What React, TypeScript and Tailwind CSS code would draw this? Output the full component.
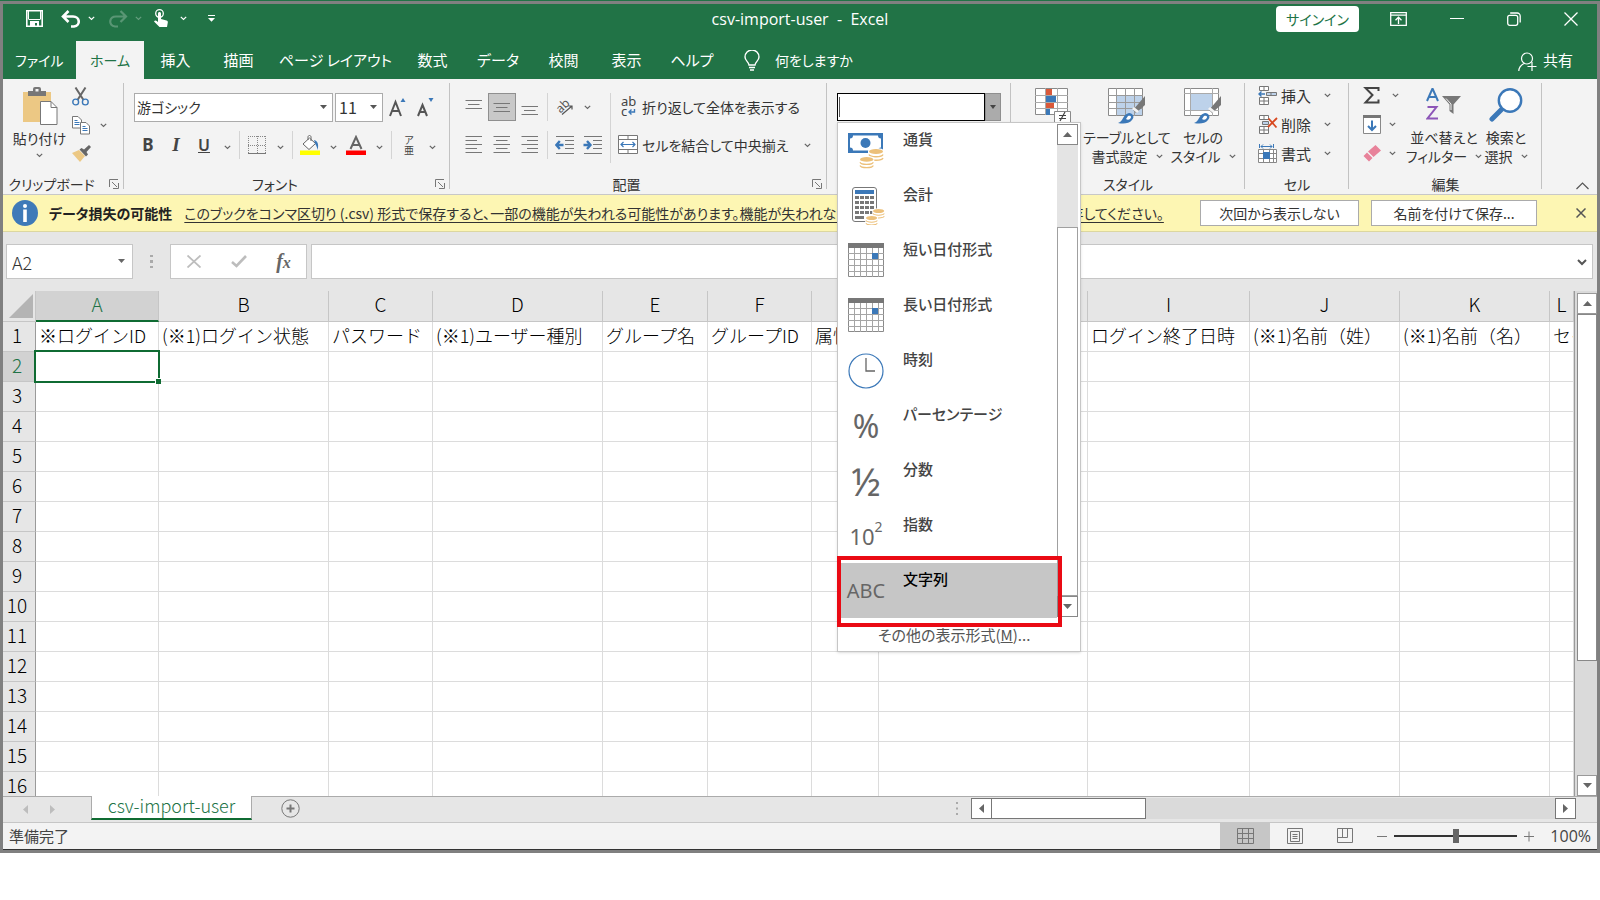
import type { ReactNode } from "react";

const tabs = [
  { label: "挿入", width: "w-[63px]" },
  { label: "描画", width: "w-[63px]" },
  { label: "ページ レイアウト", width: "w-[131px]" },
  { label: "数式", width: "w-[63px]" },
  { label: "データ", width: "w-[68px]" },
  { label: "校閲", width: "w-[63px]" },
  { label: "表示", width: "w-[63px]" },
  { label: "ヘルプ", width: "w-[68px]" },
];

const columns = [
  { name: "A", title: "※ログインID" },
  { name: "B", title: "(※1)ログイン状態" },
  { name: "C", title: "パスワード" },
  { name: "D", title: "(※1)ユーザー種別" },
  { name: "E", title: "グループ名" },
  { name: "F", title: "グループID" },
  { name: "G", title: "属性" },
  { name: "H", title: "" },
  { name: "I", title: "ログイン終了日時" },
  { name: "J", title: "(※1)名前（姓）" },
  { name: "K", title: "(※1)名前（名）" },
  { name: "L", title: "セイ" },
];

const rows = Array.from({ length: 16 }, (_, i) => i + 1);

/* ---------- small shared pieces ---------- */

function Chevron({ className = "text-[#666]" }: { className?: string }) {
  return (
    <svg className={`shrink-0 ${className}`} width="7" height="5" viewBox="0 0 7 5" fill="none" stroke="currentColor" strokeWidth="1.2">
      <path d="M0.8 0.8 3.5 3.5 6.2 0.8" />
    </svg>
  );
}

function Triangle({ dir, className = "text-[#666]" }: { dir: "up" | "down" | "left" | "right"; className?: string }) {
  const paths = {
    up: "M0 7 4.5 2 9 7Z",
    down: "M0 2 4.5 7 9 2Z",
    left: "M7 0 2 4.5 7 9Z",
    right: "M2 0 7 4.5 2 9Z",
  };
  return (
    <svg className={`shrink-0 ${className}`} width="9" height="9" viewBox="0 0 9 9" fill="currentColor">
      <path d={paths[dir]} />
    </svg>
  );
}

function Tool({ label, active, children }: { label: string; active?: boolean; children: ReactNode }) {
  return (
    <button
      type="button"
      aria-label={label}
      className={`flex h-7 w-7 shrink-0 items-center justify-center ${active ? "border border-[#8f8f8f] bg-[#c8c8c8]" : ""}`}
    >
      {children}
    </button>
  );
}

function More({ label }: { label: string }) {
  return (
    <button type="button" aria-label={label} className="flex h-7 w-[18px] shrink-0 items-center justify-center pt-1">
      <Chevron />
    </button>
  );
}

function Sep() {
  return <div className="mx-[3px] h-7 w-px shrink-0 bg-[#d4d4d4]" />;
}

function Group({ label, width, launcher, children }: { label: string; width: string; launcher?: boolean; children: ReactNode }) {
  return (
    <section className={`relative flex h-[115px] shrink-0 flex-col justify-between ${width}`}>
      {children}
      <div className={`flex h-5 items-center justify-center ${launcher ? "pr-6" : ""}`}>{label}</div>
      {launcher && (
        <button type="button" aria-label={`${label}の設定`} className="absolute bottom-[5px] right-[5px]">
          <svg width="10" height="10" viewBox="0 0 10 10" fill="none" stroke="#777">
            <path d="M0.5 8V0.5H9M3 3l5 5M9.5 4v5.5H4" />
          </svg>
        </button>
      )}
      <div className="absolute right-0 top-1 h-[106px] w-px bg-[#c2c2c2]" />
    </section>
  );
}

/* ---------- ribbon icons ---------- */

function Lines({ rows, align }: { rows: number[]; align: "left" | "center" | "right" }) {
  return (
    <svg width="18" height="20" viewBox="0 0 18 20" stroke="#777">
      {rows.map((y, i) => {
        const short = i % 2 === 1;
        const x1 = !short || align === "left" ? 0.5 : align === "center" ? 3 : 6;
        const x2 = !short || align === "right" ? 17 : align === "center" ? 14.5 : 12;
        return <path key={y} d={`M${x1} ${y}.5H${x2}`} />;
      })}
    </svg>
  );
}

function IndentIcon({ right }: { right?: boolean }) {
  return (
    <svg width="20" height="20" viewBox="0 0 20 20" fill="none">
      <path stroke="#777" d="M1 1.5h18M10 5.5h9M10 9.5h9M10 13.5h9M1 18.5h18" />
      <path stroke="#3b78b8" strokeWidth="2.4" d={right ? "M0.5 10H7M4 6 7.5 10 4 14" : "M1.5 10H8.5M4.8 6 1.3 10l3.5 4"} />
    </svg>
  );
}

function PasteIcon() {
  return (
    <svg width="36" height="40" viewBox="0 0 36 40" fill="none">
      <path fill="#ecc884" d="M1 5h28v30H1z" />
      <path fill="#777" d="M6 4h5V2a2 2 0 0 1 2-2h4a2 2 0 0 1 2 2v2h5v5H6z" />
      <path fill="#f3f3f3" d="M13.500 2h3v2.500h-3z" />
      <path fill="#fff" stroke="#777" d="M18.500 14.500H29l6 6V37.500H18.500z" />
      <path stroke="#777" d="M29 14.500v6h6" />
    </svg>
  );
}

function CutIcon() {
  return (
    <svg width="17" height="19" viewBox="0 0 17 19" fill="none">
      <path stroke="#666" strokeWidth="2" d="M3.500 0.500 11.500 13M13.500 0.500 5.500 13" />
      <circle cx="3.700" cy="15" r="2.900" stroke="#3b78b8" strokeWidth="1.400" />
      <circle cx="13.300" cy="15" r="2.900" stroke="#3b78b8" strokeWidth="1.400" />
    </svg>
  );
}

function CopyIcon() {
  return (
    <svg width="18" height="19" viewBox="0 0 18 19" fill="#fff" stroke="#777">
      <path d="M0.500 0.500H6l3.500 3.500v8h-9z" />
      <path stroke="#3b78b8" d="M2.500 4.500h3M2.500 6.500h5M2.500 8.500h5" />
      <path d="M8.500 6.500H14l3.500 3.500v8h-9z" />
      <path stroke="#3b78b8" d="M10.500 10.500h3M10.500 12.500h5M10.500 14.500h5" />
    </svg>
  );
}

function PainterIcon() {
  return (
    <svg width="19" height="17" viewBox="0 0 19 17">
      <path fill="#ecc884" d="M0 8 7 5l6 6-5 6z" />
      <path fill="#666" d="M7.500 4.500 9.500 3l2.500 1.500L17 0l2 2-4.500 5 1.500 2.500-2 2z" />
    </svg>
  );
}

function BrushOverlay() {
  return (
    <>
      <path fill="#777" d="M37 8v9l-9 8-3-3z" />
      <path fill="#f3f3f3" d="m26 19 5 4-2 2-5-4z" />
      <path fill="#3b78b8" d="M10 35c5-1 5-9 11-10 4 0 6 4 3 7-3 4-9 4-14 3z" />
      <path fill="#fff" d="M20 28c3-1 4 1 2 3-1 1-3 1-4 0z" />
    </>
  );
}

function CondFormatIcon() {
  return (
    <svg width="37" height="36" viewBox="0 0 37 36">
      <path fill="#fff" stroke="#8a8a8a" d="M0.500 0.500h32v26h-32z" />
      <path stroke="#aaa" d="M0 7.500h33M0 14.500h33M0 20.500h33M10.500 0v27M22.500 0v27" />
      <path fill="#d9593a" d="M11 1h6v6h-6zM11 15h8v5h-8z" />
      <path fill="#3b78b8" d="M11 8h10v6H11zM11 21h4v6h-4z" />
      <path fill="#fff" stroke="#8a8a8a" d="M19.500 23.500h16v12h-16z" />
      <path stroke="#444" strokeWidth="1.200" d="M24 27.500h7M24 30.500h7M30 24l-5 9" />
    </svg>
  );
}

function TableFormatIcon() {
  return (
    <svg width="38" height="36" viewBox="0 0 38 36">
      <path fill="#fff" stroke="#8a8a8a" d="M0.500 0.500h34v27h-34z" />
      <path fill="#bdd2ea" d="M9 8h25v19H9z" />
      <path stroke="#9a9a9a" d="M0 7.500h35M0 14.500h35M0 20.500h35M8.500 0v28M17.500 0v28M26.500 0v28" />
      <BrushOverlay />
    </svg>
  );
}

function CellStyleIcon() {
  return (
    <svg width="38" height="36" viewBox="0 0 38 36">
      <path fill="#fff" stroke="#8a8a8a" d="M0.500 0.500h34v27h-34z" />
      <path stroke="#aaa" d="M0 5.500h35M0 22.500h35M6.500 0v28M28.500 0v28" />
      <path fill="#bdd2ea" d="M7 6h21v16H7z" />
      <BrushOverlay />
    </svg>
  );
}

function InsertCellsIcon() {
  return (
    <svg width="19" height="19" viewBox="0 0 19 19" fill="#fff" stroke="#777">
      <path d="M1.500 0.500h9v4h-9zM6 0.500v4M1.500 11.500h9v7h-9zM6 11.500v7M1.500 15h9" />
      <path fill="#bdd2ea" d="M8.500 6.500h10v3h-10zM13 6.500v3" />
      <path fill="none" stroke="#3b78b8" strokeWidth="1.400" d="M7 8H1M3.500 5.500 1 8l2.500 2.500" />
    </svg>
  );
}

function DeleteCellsIcon() {
  return (
    <svg width="20" height="19" viewBox="0 0 20 19" fill="#fff" stroke="#777">
      <path d="M1.500 0.500h9v4h-9zM6 0.500v4M1.500 11.500h9v7h-9zM6 11.500v7M1.500 15h9" />
      <path fill="#bdd2ea" d="M4.500 6.500h6v3h-6z" />
      <path fill="none" stroke="#d8481f" strokeWidth="1.800" d="m10.500 3.500 8 9M19 3l-9 9" />
    </svg>
  );
}

function FormatCellsIcon() {
  return (
    <svg width="19" height="20" viewBox="0 0 19 20" fill="#fff" stroke="#888">
      <path d="M0.500 5.500h18v13h-18zM0.500 9.500h18M0.500 14.500h18M5.500 5.500v13M11.500 5.500v13M15.500 5.500v13" />
      <path fill="#3b78b8" stroke="none" d="M5 8h7v7H5z" />
      <path fill="none" stroke="#3b78b8" d="M1.500 0v4M15.500 0v4M3 2.500h11M5 0.500l-2 2 2 2M12 0.500l2 2-2 2" />
    </svg>
  );
}

function SortFilterIcon() {
  return (
    <svg width="36" height="32" viewBox="0 0 36 32" fill="none">
      <path stroke="#3b78b8" strokeWidth="2" d="M1 13 6.500 0.500 12 13M3 9h7" />
      <path stroke="#8d56b8" strokeWidth="2" d="M1.500 19h9L1.500 30.500H12" />
      <path fill="#777" d="M16 8h19l-7.500 8.500V26l-4-3v-6.500z" />
      <path stroke="#f3f3f3" d="M20 10.500l5 5.500v6" />
    </svg>
  );
}

function FindIcon() {
  return (
    <svg width="34" height="34" viewBox="0 0 34 34" fill="none" stroke="#3b78b8">
      <path strokeWidth="5" strokeLinecap="round" d="M3 31 12 22" />
      <circle cx="21" cy="12.500" r="11.200" fill="#fff" strokeWidth="2.400" />
    </svg>
  );
}

/* ---------- number format list ---------- */

function Coins({ x, y, s = 1 }: { x: number; y: number; s?: number }) {
  return (
    <g transform={`translate(${x} ${y}) scale(${s})`}>
      <path fill="#fff" d="M-1 2c0-4 16-4 16 0v11c0 3-16 3-16 0z" />
      <ellipse cx="7" cy="2.500" rx="7" ry="2.500" fill="#ecc07a" />
      <path fill="none" stroke="#ecc07a" strokeWidth="1.300" d="M0 5.500c1 3 13 3 14 0M0 9c1 3 13 3 14 0" />
    </g>
  );
}

function CurrencyIcon() {
  return (
    <svg width="36" height="36" viewBox="0 0 36 36">
      <path fill="#3b78b8" d="M0 0h35v20H0z" />
      <path fill="#fff" d="M5 2.500h25c0 2 1 3 3 3v9c-2 0-3 1-3 3H5c0-2-1-3-3-3v-9c2 0 3-1 3-3z" />
      <circle cx="17.500" cy="10" r="5" fill="#3b78b8" />
      <Coins x={21} y={16} />
      <Coins x={12} y={24} s={0.95} />
    </svg>
  );
}

function AccountingIcon() {
  return (
    <svg width="38" height="38" viewBox="0 0 38 38">
      <rect x="5.500" y="0.500" width="24" height="34" rx="2.500" fill="#fff" stroke="#777" />
      <path fill="#3b78b8" d="M8 3h19v4H8z" />
      {[9, 14, 19, 24].map((y) => (
        <path key={y} fill="#777" d={`M8 ${y}h4v3H8zM13 ${y}h4v3h-4zM18 ${y}h4v3h-4zM23 ${y}h4v3h-4z`} />
      ))}
      <path fill="#777" d="M8 29h9v3H8z" />
      <Coins x={26} y={22} s={0.8} />
      <Coins x={19} y={29} s={0.8} />
    </svg>
  );
}

function CalendarIcon() {
  return (
    <svg width="36" height="35" viewBox="0 0 36 35">
      <path fill="#fff" stroke="#8a8a8a" d="M0.500 0.500h35v33h-35z" />
      <path stroke="#a5a5a5" d="M6.500 4v30M12.500 4v30M18.500 4v30M24.500 4v30M30.500 4v30M0 10.500h36M0 16.500h36M0 22.500h36M0 28.500h36" />
      <path fill="#777" d="M0 0h36v5H0z" />
      <path fill="#3b78b8" d="M24 10h6v6h-6z" />
    </svg>
  );
}

function ClockIcon() {
  return (
    <svg width="36" height="36" viewBox="0 0 36 36" fill="none">
      <circle cx="18" cy="18" r="17" stroke="#3b78b8" strokeWidth="1.200" />
      <path stroke="#666" strokeWidth="1.300" d="M18 5v13h9" />
    </svg>
  );
}

const formats: { label: string; icon: ReactNode }[] = [
  { label: "通貨", icon: <CurrencyIcon /> },
  { label: "会計", icon: <AccountingIcon /> },
  { label: "短い日付形式", icon: <CalendarIcon /> },
  { label: "長い日付形式", icon: <CalendarIcon /> },
  { label: "時刻", icon: <ClockIcon /> },
  { label: "パーセンテージ", icon: <span className="text-[32px]">%</span> },
  { label: "分数", icon: <span className="text-[38px]">½</span> },
  {
    label: "指数",
    icon: (
      <span className="flex text-[22px]">
        10<span className="-mt-2 text-sm">2</span>
      </span>
    ),
  },
  { label: "文字列", icon: <span className="text-xl">ABC</span> },
];

function FormatMenu() {
  return (
    <div className="absolute left-[10px] top-[43px] z-20 w-[244px] border border-[#c6c6c6] bg-white shadow-sm">
      <div className="flex">
        <div role="listbox" aria-label="表示形式" className="flex-1">
          {formats.map((f, i) => (
            <button
              key={f.label}
              type="button"
              role="option"
              aria-selected={i === 8}
              className={`flex h-[55px] w-full gap-[18px] pl-[9px] text-left text-[15px] font-medium ${i === 8 ? "bg-[#c6c6c6] text-black" : "text-[#444]"}`}
            >
              <span className="flex h-full w-[38px] shrink-0 items-center justify-center font-['Noto_Sans'] font-normal leading-none text-[#666]">
                {f.icon}
              </span>
              <span className="pt-[5px] leading-[22px]">{f.label}</span>
            </button>
          ))}
        </div>
        <div className="my-px mr-[2px] flex w-[21px] flex-col">
          <button type="button" aria-label="上へ" className="flex h-[21px] items-center justify-center border border-[#888] bg-white">
            <Triangle dir="up" />
          </button>
          <div className="h-[82px] bg-[#e4e4e4]" />
          <div className="flex-1 border border-[#a0a0a0] bg-white" />
          <button type="button" aria-label="下へ" className="flex h-[21px] items-center justify-center border border-[#888] bg-white">
            <Triangle dir="down" />
          </button>
        </div>
      </div>
      <button type="button" className="flex h-[33px] w-full items-center pl-10 text-[15px] text-[#555]">
        その他の表示形式(<span className="underline">M</span>)...
      </button>
      <div className="absolute -left-px bottom-6 h-[71px] w-[225px] border-4 border-[#ea0a14]" />
    </div>
  );
}

/* ---------- window parts ---------- */

function TitleBar() {
  return (
    <div className="grid h-[37px] grid-cols-[1fr_auto_1fr] items-center">
      <div className="flex h-full items-center pb-2 pl-[23px]">
        <button type="button" aria-label="上書き保存" className="mr-[18px]">
          <svg width="17" height="17" viewBox="0 0 17 17" fill="none" stroke="#fff" strokeWidth="1.600">
            <path d="M0.800 0.800h15.400v15.400H0.800z" />
            <path d="M2.500 9.500h12M2.500 1v8M14.500 1v8" strokeWidth="1" />
            <path fill="#fff" stroke="none" d="M4 11h9v5h-2v-3h-2v3H4z" />
          </svg>
        </button>
        <button type="button" aria-label="元に戻す">
          <svg width="20" height="18" viewBox="0 0 20 18" fill="none" stroke="#fff" strokeWidth="2.600">
            <path d="M2 6.500h10c7 0 8 9 1 10H10M7.500 1 2 6.500 7.500 12" />
          </svg>
        </button>
        <span className="mx-[7px]"><Chevron className="text-white" /></span>
        <button type="button" aria-label="やり直し" className="ml-[6px] opacity-25">
          <svg width="20" height="18" viewBox="0 0 20 18" fill="none" stroke="#fff" strokeWidth="2.200">
            <path d="M18 6.500H8c-7 0-8 9-1 10h3M12.500 1 18 6.500 12.500 12" />
          </svg>
        </button>
        <span className="ml-[7px] mr-3 opacity-30"><Chevron className="text-white" /></span>
        <button type="button" aria-label="タッチ/マウス モードの切り替え">
          <svg width="14" height="19" viewBox="0 0 14 19" fill="#fff">
            <circle cx="5.500" cy="4.500" r="3.800" fill="none" stroke="#fff" strokeWidth="1.300" />
            <path d="M4 4.500c0-2 3-2 3 0V10l5.500 1.500c1 .3 1.500 1 1.300 2L13 18H5.500L0 12.500c1-1.500 2.500-1 4 .5z" />
          </svg>
        </button>
        <span className="ml-3 mr-[21px]"><Chevron className="text-white" /></span>
        <button type="button" aria-label="クイック アクセス ツール バーのカスタマイズ">
          <svg width="7" height="7" viewBox="0 0 7 7" fill="#fff">
            <path d="M0 0h7v1H0zM0 3h7L3.500 6.800z" />
          </svg>
        </button>
      </div>
      <h1 className="whitespace-pre pb-2 font-['Open_Sans'] text-base text-white">csv-import-user  -  Excel</h1>
      <div className="flex h-full items-center justify-end pb-2 pr-[19px] text-white">
        <button type="button" className="mr-[31px] h-[26px] w-[83px] rounded-sm bg-white text-sm text-[#217346]">サインイン</button>
        <button type="button" aria-label="リボンの表示オプション" className="mr-[43px]">
          <svg width="17" height="14" viewBox="0 0 17 14" fill="none" stroke="#fff" strokeWidth="1.300">
            <path d="M0.700 0.700h15.600v12.600H0.700zM0.700 3.200h15.600M8.500 12V5.500M5.500 8.200l3-3 3 3" />
          </svg>
        </button>
        <button type="button" aria-label="最小化" className="mr-[43px] h-px w-[14px] bg-white" />
        <button type="button" aria-label="元に戻す (縮小)" className="mr-[43px]">
          <svg width="14" height="14" viewBox="0 0 14 14" fill="none" stroke="#fff" strokeWidth="1.300">
            <rect x="0.700" y="3.300" width="10" height="10" rx="2" />
            <path d="M3.200 1h7a3 3 0 0 1 3 3v6.500" />
          </svg>
        </button>
        <button type="button" aria-label="閉じる">
          <svg width="14" height="14" viewBox="0 0 14 14" stroke="#fff" strokeWidth="1.300">
            <path d="M0.500 0.500l13 13M13.500 0.500l-13 13" />
          </svg>
        </button>
      </div>
    </div>
  );
}

function TabBar() {
  return (
    <nav className="flex h-[38px] items-stretch whitespace-nowrap text-[15px] text-white">
      <button type="button" className="w-[73px] pl-3 text-left text-sm">ファイル</button>
      <button type="button" className="w-[68px] bg-[#f3f3f3] text-sm text-[#217346]">ホーム</button>
      {tabs.map((tab) => (
        <button key={tab.label} type="button" className={tab.width}>{tab.label}</button>
      ))}
      <button type="button" className="flex items-center gap-[15px] pl-[18px] text-sm">
        <svg width="16" height="21" viewBox="0 0 16 21" fill="none" stroke="#fff" strokeWidth="1.400">
          <path d="M5 15c0-3-4-4-4-8a7 7 0 0 1 14 0c0 4-4 5-4 8zM5 17.500h6M6 20h4" />
        </svg>
        何をしますか
      </button>
      <button type="button" className="ml-auto flex items-center gap-[6px] pr-6">
        <svg className="mt-1" width="19" height="20" viewBox="0 0 19 20" fill="none" stroke="#fff" strokeWidth="1.200">
          <circle cx="9" cy="6.500" r="5.500" />
          <path d="M0.800 19c0-4 2.500-6 5-7.500M14 10v9M9.500 14.500h9" />
        </svg>
        共有
      </button>
    </nav>
  );
}

function BigButton({ icon, first, second, width }: { icon: ReactNode; first: string; second: string; width: string }) {
  return (
    <button type="button" className={`flex shrink-0 flex-col items-center whitespace-nowrap leading-[19px] ${width}`}>
      <span className="flex h-10 items-start">{icon}</span>
      <span>{first}</span>
      <span className="flex items-center gap-2">
        {second}
        <Chevron />
      </span>
    </button>
  );
}

function Ribbon() {
  return (
    <div className="flex border-b border-[#c8c8c8] bg-[#f3f3f3] text-sm text-[#333]">
      <Group label="クリップボード" width="w-[121px]" launcher>
        <div className="flex pt-2">
          <button type="button" className="flex w-[69px] flex-col items-center pl-1">
            <PasteIcon />
            <span className="h-[22px] leading-[22px]">貼り付け</span>
            <span className="mt-1"><Chevron /></span>
          </button>
          <div className="flex flex-col gap-[10px]">
            <button type="button" aria-label="切り取り" className="flex h-[19px] w-[17px] items-center"><CutIcon /></button>
            <div className="flex items-center gap-[10px]">
              <button type="button" aria-label="コピー"><CopyIcon /></button>
              <Chevron />
            </div>
            <button type="button" aria-label="書式のコピー/貼り付け"><PainterIcon /></button>
          </div>
        </div>
      </Group>

      <Group label="フォント" width="w-[326px]" launcher>
        <div className="flex flex-col gap-[10px] pl-[10px] pt-[14px]">
          <div className="flex h-7 items-center">
            <div className="relative mr-[2px]">
              <select aria-label="フォント名" className="block h-[29px] w-[199px] appearance-none rounded-none border border-[#ababab] bg-white pl-[2px]">
                <option>游ゴシック</option>
              </select>
              <svg className="pointer-events-none absolute right-[6px] top-3" width="7" height="4" viewBox="0 0 7 4"><path fill="#555" d="M0 0h7L3.500 4z" /></svg>
            </div>
            <div className="relative">
              <select aria-label="フォント サイズ" className="block h-[29px] w-12 appearance-none rounded-none border border-[#ababab] bg-white pl-[3px] text-base">
                <option>11</option>
              </select>
              <svg className="pointer-events-none absolute right-[6px] top-3" width="7" height="4" viewBox="0 0 7 4"><path fill="#555" d="M0 0h7L3.500 4z" /></svg>
            </div>
            <Tool label="フォント サイズの拡大">
              <svg width="17" height="19" viewBox="0 0 17 19" fill="none">
                <path stroke="#555" strokeWidth="2" d="M1 18 6.500 4 12 18M3 13h7" />
                <path fill="#3b78b8" d="M11.500 4 14 0l2.500 4z" />
              </svg>
            </Tool>
            <Tool label="フォント サイズの縮小">
              <svg width="17" height="19" viewBox="0 0 17 19" fill="none">
                <path stroke="#555" strokeWidth="2" d="M1 18 5.500 7 10 18M2.500 14h6" />
                <path fill="#3b78b8" d="M11.500 0 14 4l2.500-4z" />
              </svg>
            </Tool>
          </div>
          <div className="flex h-7 items-center">
            <Tool label="太字"><span className="font-['Noto_Sans'] text-[17px] font-bold text-[#444]">B</span></Tool>
            <Tool label="斜体"><span className="font-['Liberation_Serif'] text-[19px] font-bold italic text-[#444]">I</span></Tool>
            <Tool label="下線"><span className="font-['Noto_Sans'] text-base font-semibold text-[#444] underline decoration-1">U</span></Tool>
            <More label="下線の種類" />
            <Sep />
            <Tool label="罫線">
              <svg width="18" height="18" viewBox="0 0 18 18" fill="none" stroke="#888">
                <path strokeDasharray="1 1" d="M0.500 0v17M17.500 0v17M9.500 0v17M0 0.500h18M0 9.500h18" />
                <path stroke="#777" d="M0 17.500h18" />
              </svg>
            </Tool>
            <More label="罫線の種類" />
            <Sep />
            <Tool label="塗りつぶしの色">
              <svg width="20" height="20" viewBox="0 0 20 20" fill="none">
                <path fill="#fff" stroke="#666" d="M3 9 9.500 3l6 5.500-6.500 6zM8 5V2c0-2 3-2 3 0v4" />
                <path fill="#3b78b8" d="M14 5c4 1 5 5 3.500 10-.5-3-1-4-2-5.500z" />
                <path fill="#ffff00" d="M0 15.500h20v4.500H0z" />
              </svg>
            </Tool>
            <More label="塗りつぶしの色の選択" />
            <Tool label="フォントの色">
              <svg width="20" height="20" viewBox="0 0 20 20" fill="none">
                <path stroke="#666" strokeWidth="2" d="M4.500 14 10 2l5.500 12M6.500 10h7" />
                <path fill="#ff0000" d="M0 15.500h20v4.500H0z" />
              </svg>
            </Tool>
            <More label="フォントの色の選択" />
            <Sep />
            <Tool label="ふりがなの表示">
              <span className="flex flex-col text-[10px] leading-[10px] text-[#444]"><span>ア</span><span>亜</span></span>
            </Tool>
            <More label="ふりがなの設定" />
          </div>
        </div>
      </Group>

      <Group label="配置" width="w-[377px]" launcher>
        <div className="flex pl-[10px] pt-[14px]">
          <div className="flex flex-col gap-[10px]">
            <div className="flex h-7 items-center">
              <Tool label="上揃え"><Lines rows={[3, 7, 11]} align="center" /></Tool>
              <Tool label="上下中央揃え" active><Lines rows={[6, 10, 14]} align="center" /></Tool>
              <Tool label="下揃え"><Lines rows={[9, 13, 17]} align="center" /></Tool>
              <Sep />
              <Tool label="方向">
                <svg className="overflow-visible" width="18" height="18" viewBox="0 0 18 18">
                  <g transform="rotate(-45 8 8)"><text x="0" y="11" fontSize="12" fill="#555" fontFamily="Noto Sans">ab</text></g>
                  <path fill="none" stroke="#555" strokeWidth="1.200" d="M6 16.500 16 8M12.500 8H16v3.500" />
                </svg>
              </Tool>
              <button type="button" aria-label="方向の種類" className="flex w-4 justify-center"><Chevron /></button>
            </div>
            <div className="flex h-7 items-center">
              <Tool label="左揃え"><Lines rows={[1, 5, 9, 13, 17]} align="left" /></Tool>
              <Tool label="中央揃え"><Lines rows={[1, 5, 9, 13, 17]} align="center" /></Tool>
              <Tool label="右揃え"><Lines rows={[1, 5, 9, 13, 17]} align="right" /></Tool>
              <Sep />
              <Tool label="インデントを減らす"><IndentIcon /></Tool>
              <Tool label="インデントを増やす"><IndentIcon right /></Tool>
            </div>
          </div>
          <div className="mx-[3px] h-[70px] w-px bg-[#d4d4d4]" />
          <div className="flex flex-col gap-[10px]">
            <button type="button" className="flex h-7 items-center gap-1 whitespace-nowrap pl-1">
              <svg className="overflow-visible" width="20" height="20" viewBox="0 0 20 20">
                <text x="3" y="9" fontSize="13" fill="#444" fontFamily="Noto Sans">ab</text>
                <text x="3" y="19" fontSize="13" fill="#444" fontFamily="Noto Sans">c</text>
                <path fill="none" stroke="#3b78b8" strokeWidth="1.400" d="M16.500 12v3H11M13.500 12.500 11 15l2.500 2.500" />
              </svg>
              折り返して全体を表示する
            </button>
            <button type="button" className="flex h-7 items-center gap-1 whitespace-nowrap pl-1">
              <svg width="20" height="20" viewBox="0 0 20 20" fill="#fff" stroke="#777">
                <path d="M0.500 0.500h19v18H0.500zM10 0.500v4M10 14.500v4M0.500 4.500h19M0.500 14.500h19" />
                <path fill="none" stroke="#3b78b8" strokeWidth="1.200" d="M3 9.500h14M5.500 7 3 9.500 5.500 12M14.500 7 17 9.500 14.500 12" />
              </svg>
              セルを結合して中央揃え
              <span className="pl-3"><Chevron /></span>
            </button>
          </div>
        </div>
      </Group>

      <section className="relative h-[115px] w-[184px] shrink-0 pl-[10px] pt-[14px]">
        <div className="relative flex h-7 w-[164px]">
          <input aria-label="数値の書式" className="min-w-0 flex-1 border border-black bg-white px-1" />
          <div className="absolute left-[2px] top-1 h-5 w-px bg-[#555]" />
          <button type="button" aria-label="表示形式を開く" className="flex w-4 items-center justify-center border border-[#8f8f8f] bg-[#ababab]">
            <svg width="6" height="4" viewBox="0 0 6 4"><path fill="#444" d="M0 0h6L3 4z" /></svg>
          </button>
        </div>
        <FormatMenu />
        <div className="absolute right-0 top-1 h-[106px] w-px bg-[#c2c2c2]" />
      </section>

      <Group label="スタイル" width="w-[234px]">
        <div className="flex pt-[9px]">
          <button type="button" aria-label="条件付き書式" className="flex w-[74px] items-start justify-center pl-[10px]"><CondFormatIcon /></button>
          <BigButton width="w-[84px]" icon={<TableFormatIcon />} first="テーブルとして" second="書式設定" />
          <BigButton width="w-[68px]" icon={<CellStyleIcon />} first="セルの" second="スタイル" />
        </div>
      </Group>

      <Group label="セル" width="w-[104px]">
        <div className="flex flex-col pl-3 pt-[2px] text-[15px]">
          {[
            { label: "挿入", icon: <InsertCellsIcon /> },
            { label: "削除", icon: <DeleteCellsIcon /> },
            { label: "書式", icon: <FormatCellsIcon /> },
          ].map((item) => (
            <button key={item.label} type="button" className="flex h-[29px] items-center pl-px">
              <span className="w-[23px]">{item.icon}</span>
              <span className="w-[43px] text-left">{item.label}</span>
              <Chevron />
            </button>
          ))}
        </div>
      </Group>

      <Group label="編集" width="w-[193px]">
        <div className="flex">
          <div className="flex w-[58px] flex-col pl-[14px] pt-[2px]">
            <button type="button" aria-label="合計" className="flex h-[29px] items-center gap-[11px]">
              <svg width="18" height="17" viewBox="0 0 18 17" fill="none" stroke="#444" strokeWidth="2">
                <path d="M15.500 4V1H2.500l7 7-7 7.500h13v-3" />
              </svg>
              <Chevron />
            </button>
            <button type="button" aria-label="フィル" className="flex h-[29px] items-center gap-2">
              <svg width="18" height="19" viewBox="0 0 18 19" fill="none">
                <path fill="#fff" stroke="#888" d="M0.500 0.500h17v18H0.500z" />
                <path fill="#777" d="M0 0h18v3H0z" />
                <path stroke="#3b78b8" strokeWidth="2" d="M9 5.500V15M5 11l4 4 4-4" />
              </svg>
              <Chevron />
            </button>
            <button type="button" aria-label="クリア" className="flex h-[29px] items-center gap-2">
              <svg width="18" height="17" viewBox="0 0 18 17" fill="#e8829a">
                <path d="M12.500 0 18 5.500 10.500 12 5 6.500zM4 7.500l5.500 5.500L6 16.500 0.500 11z" />
              </svg>
              <Chevron />
            </button>
          </div>
          <div className="flex pt-[9px]">
            <BigButton width="w-[74px]" icon={<SortFilterIcon />} first="並べ替えと" second="フィルター" />
            <BigButton width="w-[50px]" icon={<FindIcon />} first="検索と" second="選択" />
          </div>
        </div>
      </Group>

      <div className="flex flex-1 items-end justify-end pb-1 pr-2">
        <button type="button" aria-label="リボンを折りたたむ">
          <svg width="13" height="8" viewBox="0 0 13 8" fill="none" stroke="#555" strokeWidth="1.200"><path d="M0.500 7 6.500 1l6 6" /></svg>
        </button>
      </div>
    </div>
  );
}

function MessageBar() {
  return (
    <div className="flex h-[37px] items-center border-b border-[#dcd7a0] bg-[#fdf6b3] pl-[9px] pr-[11px] text-sm text-[#333]">
      <svg className="shrink-0" width="26" height="26" viewBox="0 0 26 26">
        <circle cx="13" cy="13" r="13" fill="#3f7ab8" />
        <circle cx="13" cy="6" r="2" fill="#fff" />
        <path fill="#fff" d="M11.200 9.500h3.600V22h-3.600z" />
      </svg>
      <strong className="ml-[11px] whitespace-nowrap font-bold text-[#222]">データ損失の可能性</strong>
      <a href="#save-format" className="ml-3 min-w-0 flex-1 whitespace-nowrap underline decoration-1 underline-offset-[3px]">
        このブックをコンマ区切り (.csv) 形式で保存すると、一部の機能が失われる可能性があります。機能が失われないようにするには Excel ブック形式で保存してください。
      </a>
      <button type="button" className="ml-4 h-[26px] w-[159px] shrink-0 border border-[#ababab] bg-white">次回から表示しない</button>
      <button type="button" className="ml-3 h-[26px] w-[166px] shrink-0 border border-[#ababab] bg-white">名前を付けて保存...</button>
      <button type="button" aria-label="メッセージを閉じる" className="ml-[39px]">
        <svg width="10" height="10" viewBox="0 0 10 10" stroke="#555" strokeWidth="1.500"><path d="M0.500 0.500l9 9M9.500 0.500l-9 9" /></svg>
      </button>
    </div>
  );
}

function FormulaBar() {
  return (
    <div className="flex h-[59px] items-center pl-[3px] pr-1">
      <div className="relative">
        <input aria-label="名前ボックス" defaultValue="A2" className="block h-[35px] w-[127px] border border-[#c6c6c6] bg-white pl-[5px] text-lg font-light text-[#333]" />
        <svg className="absolute right-2 top-[15px]" width="7" height="4" viewBox="0 0 7 4"><path fill="#666" d="M0 0h7L3.500 4z" /></svg>
      </div>
      <svg className="mx-4" width="5" height="14" viewBox="0 0 5 14" fill="#aaa"><path d="M1 0h3v2H1zM1 5h3v3H1zM1 11h3v2H1z" /></svg>
      <div className="flex h-[35px] w-[137px] items-center border border-[#c6c6c6] bg-white">
        <button type="button" aria-label="キャンセル" className="flex w-[45px] justify-center">
          <svg width="14" height="13" viewBox="0 0 14 13" stroke="#bdbdbd" strokeWidth="1.800"><path d="M0.500 0.500l13 12M13.500 0.500l-13 12" /></svg>
        </button>
        <button type="button" aria-label="入力" className="flex w-[45px] justify-center">
          <svg width="16" height="13" viewBox="0 0 16 13" fill="none" stroke="#bdbdbd" strokeWidth="2.600"><path d="M1 7l4.500 4L15 1" /></svg>
        </button>
        <button type="button" aria-label="関数の挿入" className="w-[45px] font-['Liberation_Serif'] text-xl font-bold italic leading-6 text-[#666]">
          f<span className="text-base">x</span>
        </button>
      </div>
      <div className="relative ml-1 flex-1">
        <input aria-label="数式バー" className="block h-[35px] w-full border border-[#c6c6c6] bg-white px-2 text-lg" />
        <svg className="absolute right-1.5 top-[15px]" width="10" height="7" viewBox="0 0 10 7" fill="none" stroke="#555" strokeWidth="2"><path d="M1 1l4 4 4-4" /></svg>
      </div>
    </div>
  );
}

function Sheet() {
  return (
    <div className="flex">
      <div className="h-[505px] min-w-0 flex-1 overflow-hidden border-r border-[#9a9a9a]">
        <table className="w-full table-fixed border-separate border-spacing-0 text-lg font-light text-black [font-feature-settings:normal]">
          <colgroup>
            <col className="w-[33px]" />
            <col className="w-[123px]" />
            <col className="w-[170px]" />
            <col className="w-[104px]" />
            <col className="w-[170px]" />
            <col className="w-[105px]" />
            <col className="w-[104px]" />
            <col className="w-[67px]" />
            <col className="w-[209px]" />
            <col className="w-[162px]" />
            <col className="w-[150px]" />
            <col className="w-[150px]" />
            <col />
          </colgroup>
          <thead>
            <tr className="h-[31px]">
              <th className="border-b border-r border-[#c6c6c6] bg-[#e6e6e6] p-0">
                <svg className="ml-[6px]" width="24" height="24" viewBox="0 0 24 24"><path fill="#b4b4b4" d="M24 0v24H0z" /></svg>
              </th>
              {columns.map((col) => (
                <th
                  key={col.name}
                  scope="col"
                  className={`overflow-hidden border-r border-[#c6c6c6] p-0 pb-1 text-[19px] leading-6 font-light ${
                    col.name === "A" ? "border-b-2 border-b-[#0f6b32] bg-[#d2d2d2] text-[#217346]" : "border-b border-b-[#c6c6c6] bg-[#e6e6e6]"
                  }`}
                >
                  {col.name}
                </th>
              ))}
            </tr>
          </thead>
          <tbody>
            {rows.map((row) => (
              <tr key={row} className="h-[30px]">
                <th
                  scope="row"
                  className={`border-b border-r border-[#c6c6c6] border-r-[#9a9a9a] p-0 pb-1 pr-1 text-[19px] leading-6 font-light ${
                    row === 2 ? "bg-[#d2d2d2] text-[#217346]" : "bg-[#e6e6e6]"
                  }`}
                >
                  {row}
                </th>
                {columns.map((col) => (
                  <td key={col.name} className="relative whitespace-nowrap border-b border-r border-[#dcdcdc] bg-white p-0 pb-1 leading-6">
                    {row === 1 && <div className="overflow-hidden pl-[3px]">{col.title}</div>}
                    {row === 2 && col.name === "A" && (
                      <div className="absolute -inset-x-0.5 -top-0.5 -bottom-0.5 z-10 border-2 border-[#0f6b32]">
                        <div className="absolute -bottom-[3px] -right-[3px] h-[6px] w-[6px] border-l border-t border-white bg-[#0f6b32]" />
                      </div>
                    )}
                  </td>
                ))}
              </tr>
            ))}
          </tbody>
        </table>
      </div>
      <div className="flex w-[22px] flex-col bg-[#dadada] pl-0.5 pt-[2px]">
        <button type="button" aria-label="上にスクロール" className="flex h-[21px] items-center justify-center border border-[#999] bg-white">
          <Triangle dir="up" />
        </button>
        <div className="h-[347px] border border-[#888] bg-white" />
        <button type="button" aria-label="下にスクロール" className="mt-auto flex h-[21px] items-center justify-center border border-[#999] bg-white">
          <Triangle dir="down" />
        </button>
      </div>
    </div>
  );
}

function SheetTabs() {
  return (
    <div className="flex h-[26px] items-start border-t border-[#ababab]">
      <button type="button" aria-label="前のシート" className="ml-[18px] mt-2"><Triangle dir="left" className="text-[#bdbdbd]" /></button>
      <button type="button" aria-label="次のシート" className="ml-[18px] mt-2"><Triangle dir="right" className="text-[#bdbdbd]" /></button>
      <button type="button" className="-mt-px ml-[34px] h-6 w-[161px] border-x border-b-2 border-x-[#ababab] border-b-[#0f6b32] bg-white pb-1 text-lg leading-[18px] font-light text-[#217346]">
        csv-import-user
      </button>
      <button type="button" aria-label="新しいシート" className="ml-[29px] mt-[2px]">
        <svg width="19" height="19" viewBox="0 0 19 19" fill="none" stroke="#777">
          <circle cx="9.500" cy="9.500" r="8.700" />
          <path strokeWidth="2" d="M9.500 5.500v8M5.500 9.500h8" />
        </svg>
      </button>
      <svg className="ml-auto mr-3 mt-[5px]" width="4" height="14" viewBox="0 0 4 14" fill="#aaa"><path d="M1 0h2v2H1zM1 5.500h2v2H1zM1 11h2v2H1z" /></svg>
      <div className="mr-[21px] mt-px flex h-[21px] w-[605px] bg-[#dadada]">
        <button type="button" aria-label="左にスクロール" className="flex w-[21px] items-center justify-center border border-[#777] bg-white">
          <Triangle dir="left" />
        </button>
        <div className="w-[154px] border border-l-0 border-[#777] bg-white" />
        <button type="button" aria-label="右にスクロール" className="ml-auto flex w-[21px] items-center justify-center border border-[#777] bg-white">
          <Triangle dir="right" />
        </button>
      </div>
    </div>
  );
}

function StatusBar() {
  return (
    <footer className="flex h-7 items-center border-b border-t border-b-[#333] border-t-[#c6c6c6] bg-[#f3f3f3] pl-[6px] pr-[6px] text-[15px] text-[#444]">
      <span className="mr-auto">準備完了</span>
      <button type="button" aria-label="標準" className="flex h-full w-[50px] items-center justify-center bg-[#c6c6c6]">
        <svg width="17" height="16" viewBox="0 0 17 16" fill="none" stroke="#777"><path d="M0.500 0.500h16v15H0.500zM5.500 0.500v15M11.500 0.500v15M0.500 5.500h16M0.500 10.500h16" /></svg>
      </button>
      <button type="button" aria-label="ページ レイアウト表示" className="flex h-full w-[50px] items-center justify-center">
        <svg width="16" height="16" viewBox="0 0 16 16" fill="none" stroke="#777"><path d="M0.500 0.500h15v15H0.500zM3.500 3.500h9v10h-9zM5.500 6.500h5M5.500 8.500h5M5.500 10.500h5" /></svg>
      </button>
      <button type="button" aria-label="改ページ プレビュー" className="flex h-full w-[50px] items-center justify-center">
        <svg width="16" height="16" viewBox="0 0 16 16" fill="none" stroke="#777"><path d="M0.500 0.500h15v14H0.500zM5.500 0.500v9M10.500 0.500v9M0.500 9.500h10" /></svg>
      </button>
      <button type="button" aria-label="縮小" className="ml-[7px] h-px w-[10px] bg-[#777]" />
      <input
        type="range"
        aria-label="ズーム"
        defaultValue={50}
        className="mx-[7px] h-[14px] w-[123px] appearance-none bg-transparent [&::-webkit-slider-runnable-track]:h-[2px] [&::-webkit-slider-runnable-track]:bg-[#333] [&::-webkit-slider-thumb]:-mt-[6px] [&::-webkit-slider-thumb]:h-[14px] [&::-webkit-slider-thumb]:w-[6px] [&::-webkit-slider-thumb]:appearance-none [&::-webkit-slider-thumb]:bg-[#666]"
      />
      <button type="button" aria-label="拡大">
        <svg width="10" height="11" viewBox="0 0 10 11" stroke="#777"><path d="M0 5.500h10M5 0.500v10" /></svg>
      </button>
      <span className="ml-4 font-['Open_Sans'] text-base">100%</span>
    </footer>
  );
}

export default function App() {
  return (
    <div className="min-h-screen bg-white">
      <div className="border-t border-[#217346] font-['Noto_Sans_CJK_JP',sans-serif] [font-feature-settings:'palt']">
        <div className="border-x-[3px] border-b-[3px] border-t-[3px] border-[#808080] bg-[#e6e6e6]">
          <header className="bg-[#217346]">
            <TitleBar />
            <TabBar />
          </header>
          <Ribbon />
          <MessageBar />
          <FormulaBar />
          <Sheet />
          <SheetTabs />
          <StatusBar />
        </div>
      </div>
    </div>
  );
}
